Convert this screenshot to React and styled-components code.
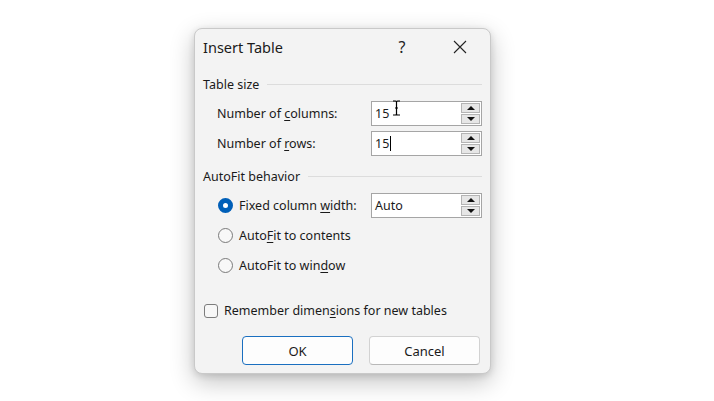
import React from "react";
import styled, { createGlobalStyle } from "styled-components";

const GlobalStyle = createGlobalStyle`
  html, body {
    margin: 0;
    padding: 0;
    background: #ffffff;
  }
  body {
    font-family: "Noto Sans", "Open Sans", sans-serif;
    color: #1a1a1a;
  }
`;

const Page = styled.div`
  width: 714px;
  height: 401px;
  padding: 28px 0 0 194px;
  box-sizing: border-box;
`;

const Dialog = styled.div`
  position: relative;
  width: 297px;
  height: 346px;
  box-sizing: border-box;
  background: #f3f3f3;
  border: 1px solid #c9c9c9;
  border-radius: 8px;
  box-shadow: 0 8px 24px rgba(0, 0, 0, 0.24), 0 2px 7px rgba(0, 0, 0, 0.12);
  display: flex;
  flex-direction: column;
  font-size: 12.5px;
`;

const TitleBar = styled.div`
  height: 36px;
  display: flex;
  align-items: center;
  padding: 0 7px 0 8px;
`;

const Title = styled.div`
  flex: 1;
  font-size: 14.5px;
  color: #1a1a1a;
`;

const TitleButton = styled.div`
  width: ${(p) => p.$w}px;
  height: 36px;
  display: flex;
  align-items: center;
  justify-content: center;
  font-size: 16px;
  color: #222;
`;

const Body = styled.div`
  padding: 0 8px 0 8px;
  display: flex;
  flex-direction: column;
`;

const GroupHeader = styled.div`
  height: 20px;
  margin-top: ${(p) => p.$top}px;
  display: flex;
  align-items: center;
  gap: 8px;
  color: #1a1a1a;
  &::after {
    content: "";
    flex: 1;
    height: 1px;
    background: #dcdcdc;
  }
`;

const Row = styled.div`
  height: 25px;
  margin-top: ${(p) => p.$top}px;
  padding-left: ${(p) => p.$indent}px;
  display: flex;
  align-items: center;
`;

const Label = styled.div`
  flex: 1;
`;

const U = styled.span`
  text-decoration: underline;
  text-underline-offset: 2px;
`;

const Spin = styled.div`
  width: 111px;
  height: 25px;
  box-sizing: border-box;
  background: #fff;
  border: 1px solid #a5a5a5;
  display: flex;
  align-items: center;
`;

const SpinValue = styled.div`
  flex: 1;
  padding-left: 3px;
  display: flex;
  align-items: center;
`;

const Caret = styled.span`
  display: inline-block;
  width: 1px;
  height: 15px;
  background: #000;
  margin-left: 1px;
`;

const SpinButtons = styled.div`
  width: 19px;
  height: 21px;
  margin-right: 1px;
  display: flex;
  flex-direction: column;
  gap: 1px;
`;

const SpinBtn = styled.div`
  flex: 1;
  background: #e6e6e6;
  border: 1px solid #b4b4b4;
  display: flex;
  align-items: center;
  justify-content: center;
  &::before {
    content: "";
    border-left: 4px solid transparent;
    border-right: 4px solid transparent;
    ${(p) =>
      p.$down ? "border-top: 4px solid #111;" : "border-bottom: 4px solid #111;"}
  }
`;

const Radio = styled.span`
  width: 15px;
  height: 15px;
  box-sizing: border-box;
  border-radius: 50%;
  margin-right: 6px;
  flex-shrink: 0;
  ${(p) =>
    p.$checked
      ? `border: 5px solid #005fb8; background: #fff;`
      : `border: 1px solid #7a7a7a; background: #f8f8f8;`}
`;

const Check = styled.span`
  width: 14px;
  height: 14px;
  box-sizing: border-box;
  border: 1px solid #7c7c7c;
  border-radius: 3px;
  background: #f7f7f7;
  margin-right: 6px;
  flex-shrink: 0;
`;

const Footer = styled.div`
  margin-top: 13px;
  padding-right: 10px;
  display: flex;
  justify-content: flex-end;
  gap: 16px;
`;

const Button = styled.div`
  width: 111px;
  height: 29px;
  box-sizing: border-box;
  border-radius: 4px;
  background: #fdfdfd;
  display: flex;
  align-items: center;
  justify-content: center;
  font-size: 13px;
  border: 1px solid ${(p) => (p.$primary ? "#1a6fc0" : "#d2d2d2")};
  ${(p) => (p.$primary ? "" : "border-bottom-color: #b8b8b8;")}
`;

const IBeam = styled.svg`
  position: absolute;
  left: 197px;
  top: 71px;
`;

const SpinBox = ({ value, caret }) => (
  <Spin>
    <SpinValue>
      {value}
      {caret && <Caret />}
    </SpinValue>
    <SpinButtons>
      <SpinBtn />
      <SpinBtn $down />
    </SpinButtons>
  </Spin>
);

export default function App() {
  return (
    <Page>
      <GlobalStyle />
      <Dialog>
        <TitleBar>
          <Title>Insert Table</Title>
          <TitleButton $w={70}>?</TitleButton>
          <TitleButton $w={46}>
            <svg width="14" height="14" viewBox="0 0 14 14">
              <path d="M1 1 L13 13 M13 1 L1 13" stroke="#222" strokeWidth="1.1" />
            </svg>
          </TitleButton>
        </TitleBar>
        <Body>
          <GroupHeader $top={9}>Table size</GroupHeader>
          <Row $top={7} $indent={14}>
            <Label>
              Number of <U>c</U>olumns:
            </Label>
            <SpinBox value="15" />
          </Row>
          <Row $top={5} $indent={14}>
            <Label>
              Number of <U>r</U>ows:
            </Label>
            <SpinBox value="15" caret />
          </Row>
          <GroupHeader $top={10}>AutoFit behavior</GroupHeader>
          <Row $top={7} $indent={15}>
            <Radio $checked />
            <Label>
              Fixed column <U>w</U>idth:
            </Label>
            <SpinBox value="Auto" />
          </Row>
          <Row $top={5} $indent={15}>
            <Radio />
            <Label>
              Auto<U>F</U>it to contents
            </Label>
          </Row>
          <Row $top={5} $indent={15}>
            <Radio />
            <Label>
              AutoFit to win<U>d</U>ow
            </Label>
          </Row>
          <Row $top={20} $indent={1}>
            <Check />
            <Label>
              Remember dimen<U>s</U>ions for new tables
            </Label>
          </Row>
        </Body>
        <Footer>
          <Button $primary>OK</Button>
          <Button>Cancel</Button>
        </Footer>
        <IBeam width="9" height="16" viewBox="0 0 9 16">
          <path
            d="M1 1 H3.5 Q4.5 1 4.5 2 V14 Q4.5 15 3.5 15 H1 M8 1 H5.5 Q4.5 1 4.5 2 M4.5 14 Q4.5 15 5.5 15 H8 M3 8 H6"
            stroke="#000"
            strokeWidth="1.2"
            fill="none"
          />
        </IBeam>
      </Dialog>
    </Page>
  );
}
